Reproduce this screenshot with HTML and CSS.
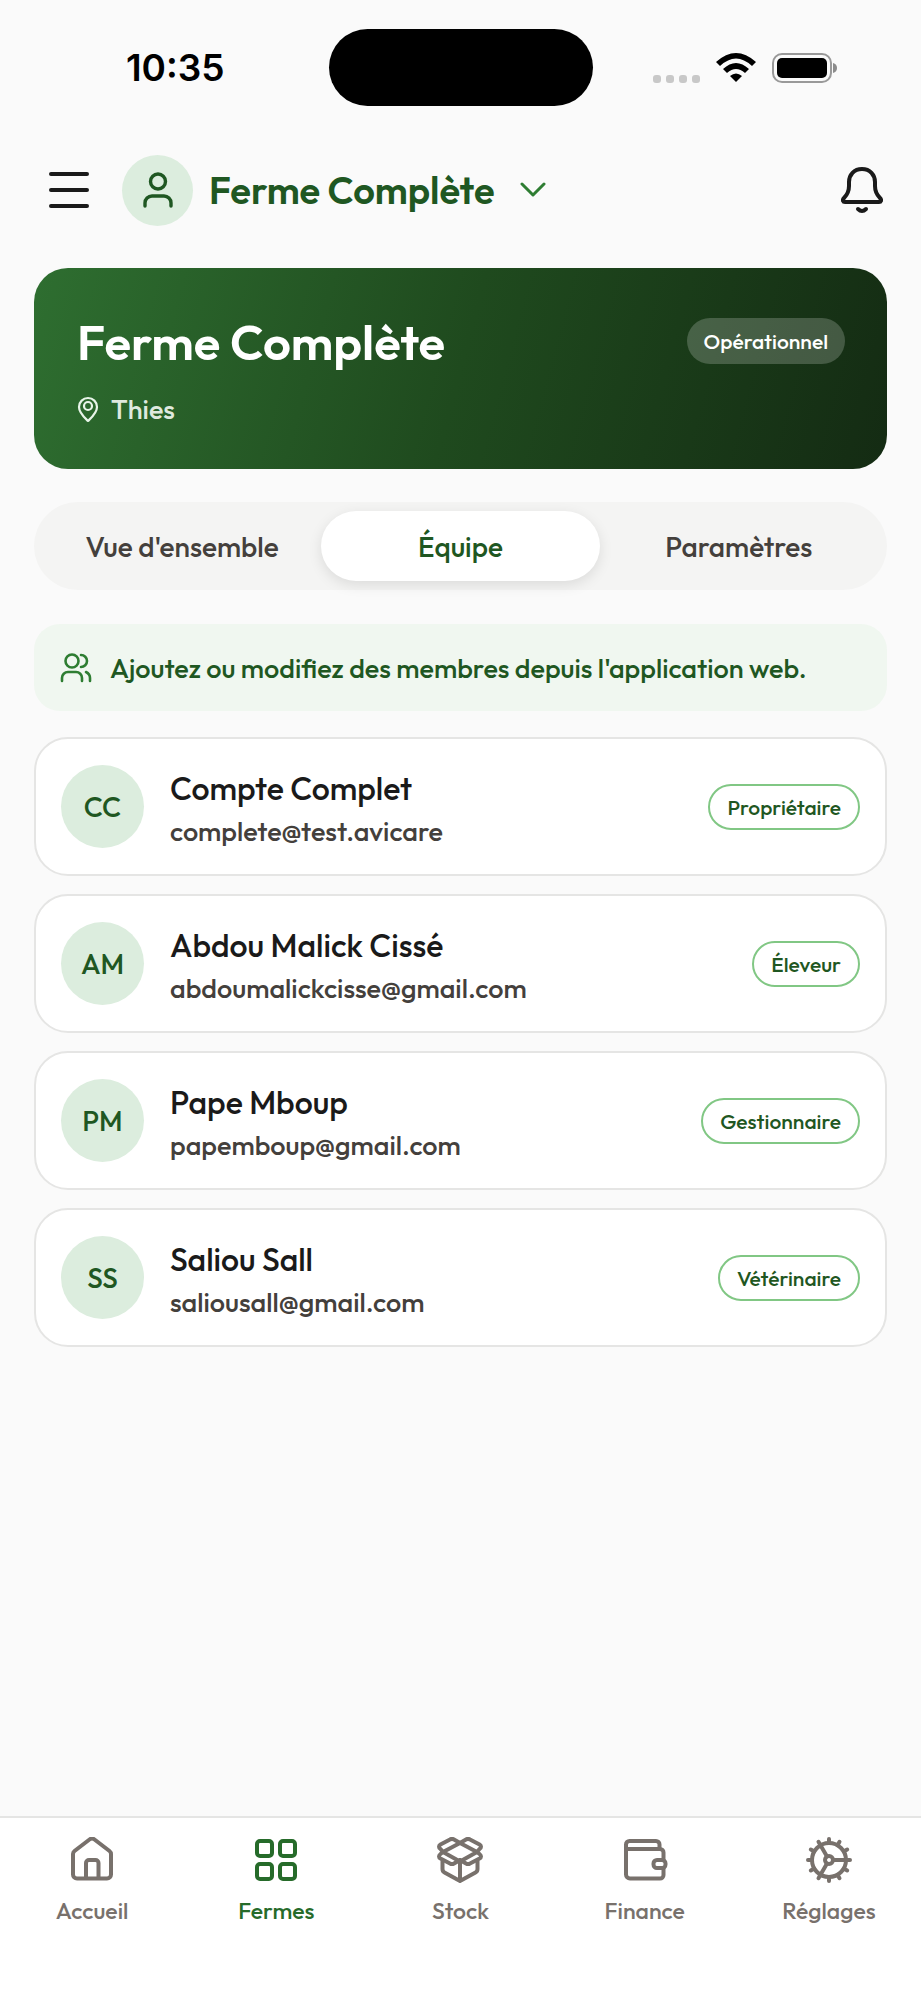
FILE: index.html
```html
<!DOCTYPE html>
<html lang="fr">
<head>
    <meta charset="UTF-8">
    <meta name="viewport" content="width=device-width, initial-scale=1.0">
    <title>Ferme Complète</title>
    <link rel="stylesheet" href="styles.css">
</head>
<body>
    <div class="status-bar">
        <span class="time">10:35</span>
        <div class="island"></div>
        <div class="status-icons">
            <div class="signal"><i></i><i></i><i></i><i></i></div>
            <svg width="40" height="30" viewBox="0 0 40 30">
                <path d="M0 9 Q20 -9 40 9 L36 13 Q20 -2 4 13Z"/>
                <path d="M7 16 Q20 4 33 16 L29 20 Q20 12 11 20Z"/>
                <path d="M14 23 Q20 18 26 23 L20 29Z"/>
            </svg>
            <svg width="66" height="30" viewBox="0 0 66 30">
                <rect x="1" y="1" width="58" height="28" rx="9" fill="none" stroke="#999" stroke-width="2"/>
                <rect x="5" y="5" width="50" height="20" rx="5"/>
                <path d="M61 10q4 1 4 5t-4 5z" fill="#8c8c8c"/>
            </svg>
        </div>
    </div>

    <header class="topbar">
        <button aria-label="Menu">
            <svg width="42" height="38" viewBox="0 0 42 38" stroke="#1a1a1a" stroke-width="4" stroke-linecap="round"><path d="M3 3h36M3 19h36M3 35h36"/></svg>
        </button>
        <button class="farm-select">
            <span class="user">
                <svg width="30" height="36" viewBox="0 0 30 36" fill="none" stroke="#1f5722" stroke-width="3.4" stroke-linecap="round"><circle cx="15" cy="9.500" r="7.500"/><path d="M2 34v-3a7 7 0 0 1 7-7h12a7 7 0 0 1 7 7v3"/></svg>
            </span>
            <span class="farm-name">Ferme Complète</span>
            <svg width="26" height="16" viewBox="0 0 26 16" fill="none" stroke="#2e7d32" stroke-width="3" stroke-linecap="round" stroke-linejoin="round"><path d="M2 2l11 11 11-11"/></svg>
        </button>
        <button class="bell" aria-label="Notifications">
            <svg width="42" height="48" viewBox="0 0 42 48" fill="none" stroke="#1a1a1a" stroke-width="4" stroke-linecap="round" stroke-linejoin="round"><path d="M21 3C13 3 8 9 8 16v4c0 6-2 9-5 12-2 2-1 4 1 4h34c2 0 3-2 1-4-3-3-5-6-5-12v-4C34 9 29 3 21 3z"/><path d="M17 43q4 4 8 0"/></svg>
        </button>
    </header>

    <main class="content">
        <section class="hero">
            <div>
                <h1>Ferme Complète</h1>
                <p class="place">
                    <svg width="22" height="26" viewBox="0 0 22 26" fill="none" stroke="#e8f5e9" stroke-width="2.200"><path d="M11 25C8 22 2 17 2 11a9 9 0 0 1 18 0c0 6-6 11-9 14z" stroke-linejoin="round"/><circle cx="11" cy="10" r="4"/></svg>
                    Thies
                </p>
            </div>
            <span class="state">Opérationnel</span>
        </section>

        <div class="tabs" role="tablist">
            <button role="tab">Vue d'ensemble</button>
            <button role="tab" class="active" aria-selected="true">Équipe</button>
            <button role="tab">Paramètres</button>
        </div>

        <p class="notice">
            <svg width="32" height="30" viewBox="0 0 32 30" fill="none" stroke="#2e7d32" stroke-width="2.600" stroke-linecap="round"><circle cx="12" cy="8" r="6.500"/><path d="M2 28v-3a6 6 0 0 1 6-6h8a6 6 0 0 1 6 6v3M21 2a6 6 0 0 1 0 12M26 19q4 2 4 6v3"/></svg>
            Ajoutez ou modifiez des membres depuis l'application web.
        </p>

        <ul class="members">
            <li>
                <span class="initials">CC</span>
                <div class="who"><h2>Compte Complet</h2><p>complete@test.avicare</p></div>
                <span class="role">Propriétaire</span>
            </li>
            <li>
                <span class="initials">AM</span>
                <div class="who"><h2>Abdou Malick Cissé</h2><p>abdoumalickcisse@gmail.com</p></div>
                <span class="role">Éleveur</span>
            </li>
            <li>
                <span class="initials">PM</span>
                <div class="who"><h2>Pape Mboup</h2><p>papemboup@gmail.com</p></div>
                <span class="role">Gestionnaire</span>
            </li>
            <li>
                <span class="initials">SS</span>
                <div class="who"><h2>Saliou Sall</h2><p>saliousall@gmail.com</p></div>
                <span class="role">Vétérinaire</span>
            </li>
        </ul>
    </main>

    <nav class="bottom-nav">
        <a href="#">
            <svg viewBox="0 0 46 46"><path d="M4 17a4 4 0 0 1 1.500-3L20.500 2.500q2.500-2 5 0L40.500 14a4 4 0 0 1 1.500 3v20.500a4 4 0 0 1-4 4H8a4 4 0 0 1-4-4z"/><path d="M17 41V26a3 3 0 0 1 3-3h6.500a3 3 0 0 1 3 3v15"/></svg>
            Accueil
        </a>
        <a href="#" class="active">
            <svg viewBox="0 0 46 46"><rect x="4" y="4" width="15" height="15" rx="3"/><rect x="27" y="4" width="15" height="15" rx="3"/><rect x="4" y="27" width="15" height="15" rx="3"/><rect x="27" y="27" width="15" height="15" rx="3"/></svg>
            Fermes
        </a>
        <a href="#">
            <svg viewBox="0 0 46 46">
                <path d="M23 6 40 15 23 24.500 6 15z"/>
                <path d="M23 6l-6-3.500q-2-1.200-4 0L3.500 7.500q-3 2 0 4.500L6 15M23 6l6-3.500q2-1.200 4 0l9.500 5q3 2 0 4.500L40 15"/>
                <path d="M6 15l-2.500 2q-3 2.500 0 4.500l9.500 5q2 1.200 4 0l6-3.500M40 15l2.500 2q3 2.500 0 4.500l-9.500 5q-2 1.200-4 0l-6-3.500"/>
                <path d="M5.500 24v8q0 2.500 2 3.500L23 44l15.500-8.500q2-1 2-3.500v-8M23 24.500V44"/>
            </svg>
            Stock
        </a>
        <a href="#">
            <svg viewBox="0 0 46 46">
                <path d="M4 12V7.500A3.500 3.500 0 0 1 7.500 4H34a3.500 3.500 0 0 1 3.500 3.500V12"/>
                <path d="M4 12h34a3.500 3.500 0 0 1 3.500 3.500V23M41.500 31v7a3.500 3.500 0 0 1-3.500 3.500H8a4 4 0 0 1-4-4V12"/>
                <rect x="31.500" y="23" width="12" height="8" rx="3.500"/>
            </svg>
            Finance
        </a>
        <a href="#">
            <svg viewBox="0 0 46 46">
                <circle cx="23" cy="23" r="17"/><circle cx="23" cy="23" r="4"/>
                <path d="M27 23h13M21 19.500 14.500 8.300M21 26.500 14.500 37.700"/>
                <path d="M40 23h4M6 23H2M23 6V2M23 40v4M37.700 14.500l3.500-2M8.300 31.500l-3.500 2M31.500 8.300l2-3.500M14.500 37.700l-2 3.500M14.500 8.300l-2-3.500M31.500 37.700l2 3.500M8.300 14.500l-3.500-2M37.700 31.500l3.500 2"/>
            </svg>
            Réglages
        </a>
    </nav>
</body>
</html>
```
FILE: styles.css
```css
* {
    box-sizing: border-box;
    margin: 0;
    padding: 0;
}
body {
    font-family: Outfit, Lato, sans-serif;
    font-weight: 500;
    background-color: #fafafa;
    color: #1a1a1a;
    min-height: 100vh;
    display: flex;
    flex-direction: column;
}
button {
    font: inherit;
    color: inherit;
    background: none;
    border: none;
    cursor: pointer;
}
svg {
    display: block;
    flex: none;
}
.status-bar {
    display: grid;
    grid-template-columns: 1fr 264px 1fr;
    align-items: center;
    height: 135px;
    padding: 0 22px;
    color: #000;
}
.time {
    font-family: Inter, sans-serif;
    font-size: 37px;
    font-weight: 600;
    text-align: center;
}
.island {
    height: 77px;
    background: #000;
    border-radius: 39px;
}
.status-icons {
    display: flex;
    justify-content: center;
    align-items: center;
    gap: 16px;
}
.signal {
    display: flex;
    gap: 5px;
    align-self: flex-end;
}
.signal i {
    width: 8px;
    height: 8px;
    border-radius: 3px;
    background: #c8c8c8;
}
.topbar {
    display: flex;
    align-items: center;
    gap: 32px;
    height: 110px;
    padding: 0 38px 0 48px;
}
.farm-select {
    display: flex;
    align-items: center;
    color: #1f5722;
}
.user {
    display: flex;
    align-items: center;
    justify-content: center;
    width: 71px;
    height: 71px;
    border-radius: 50%;
    background: #dcedde;
}
.farm-name {
    margin: 0 26px 0 16px;
    font-size: 38px;
    font-weight: 600;
}
.bell {
    margin-left: auto;
}
.content {
    flex: 1;
    padding: 23px 34px;
}
.hero {
    display: flex;
    justify-content: space-between;
    align-items: flex-start;
    min-height: 201px;
    padding: 42px 42px 0 43px;
    border-radius: 34px;
    background: linear-gradient(105deg, #2e6e30 0%, #1f4a1e 50%, #142b13 100%);
    color: #fff;
}
.hero h1 {
    font-size: 49px;
    font-weight: 600;
    line-height: 64px;
}
.place {
    display: flex;
    align-items: center;
    gap: 12px;
    margin-top: 18px;
    font-size: 27px;
    line-height: 34px;
    color: #dfe9df;
}
.state {
    margin-top: 8px;
    padding: 0 17px;
    border-radius: 23px;
    background: rgba(255, 255, 255, 0.2);
    font-size: 21px;
    line-height: 46px;
}
.tabs {
    display: grid;
    grid-template-columns: repeat(3, 1fr);
    margin-top: 33px;
    padding: 9px;
    border-radius: 44px;
    background: #f4f4f3;
    color: #44403c;
}
.tabs button {
    height: 70px;
    border-radius: 35px;
    font-size: 28px;
}
.tabs .active {
    background: #fff;
    color: #1f5722;
    box-shadow: 0 4px 14px rgba(0, 0, 0, 0.1);
}
.notice {
    display: flex;
    align-items: center;
    gap: 18px;
    min-height: 87px;
    margin-top: 34px;
    padding: 0 26px;
    border-radius: 26px;
    background: #f0f7f0;
    color: #1f5722;
    font-size: 27px;
}
.members {
    list-style: none;
    display: grid;
    gap: 18px;
    margin-top: 26px;
}
.members li {
    display: flex;
    align-items: center;
    gap: 26px;
    min-height: 139px;
    padding: 0 25px;
    border: 2px solid #e5e5e4;
    border-radius: 34px;
    background: #fff;
}
.initials {
    width: 83px;
    border-radius: 50%;
    background: #dcedde;
    color: #1f5722;
    font-size: 28px;
    line-height: 83px;
    text-align: center;
}
.who {
    flex: 1;
    padding-top: 4px;
}
.who h2 {
    font-size: 32px;
    font-weight: 500;
    line-height: 44px;
}
.who p {
    font-size: 27px;
    line-height: 42px;
    color: #44403c;
}
.role {
    padding: 0 17px;
    border: 2px solid #81c784;
    border-radius: 23px;
    color: #1f5722;
    font-size: 21px;
    line-height: 42px;
}
.bottom-nav {
    display: grid;
    grid-template-columns: repeat(5, 1fr);
    min-height: 184px;
    padding-top: 19px;
    border-top: 2px solid #e5e5e4;
    background: #fff;
}
.bottom-nav a {
    display: flex;
    flex-direction: column;
    align-items: center;
    gap: 13px;
    color: #78716c;
    font-size: 23px;
    line-height: 30px;
    text-decoration: none;
}
.bottom-nav .active {
    color: #266b2a;
}
.bottom-nav svg {
    width: 46px;
    height: 46px;
    fill: none;
    stroke: currentColor;
    stroke-width: 4;
    stroke-linecap: round;
    stroke-linejoin: round;
}
```
